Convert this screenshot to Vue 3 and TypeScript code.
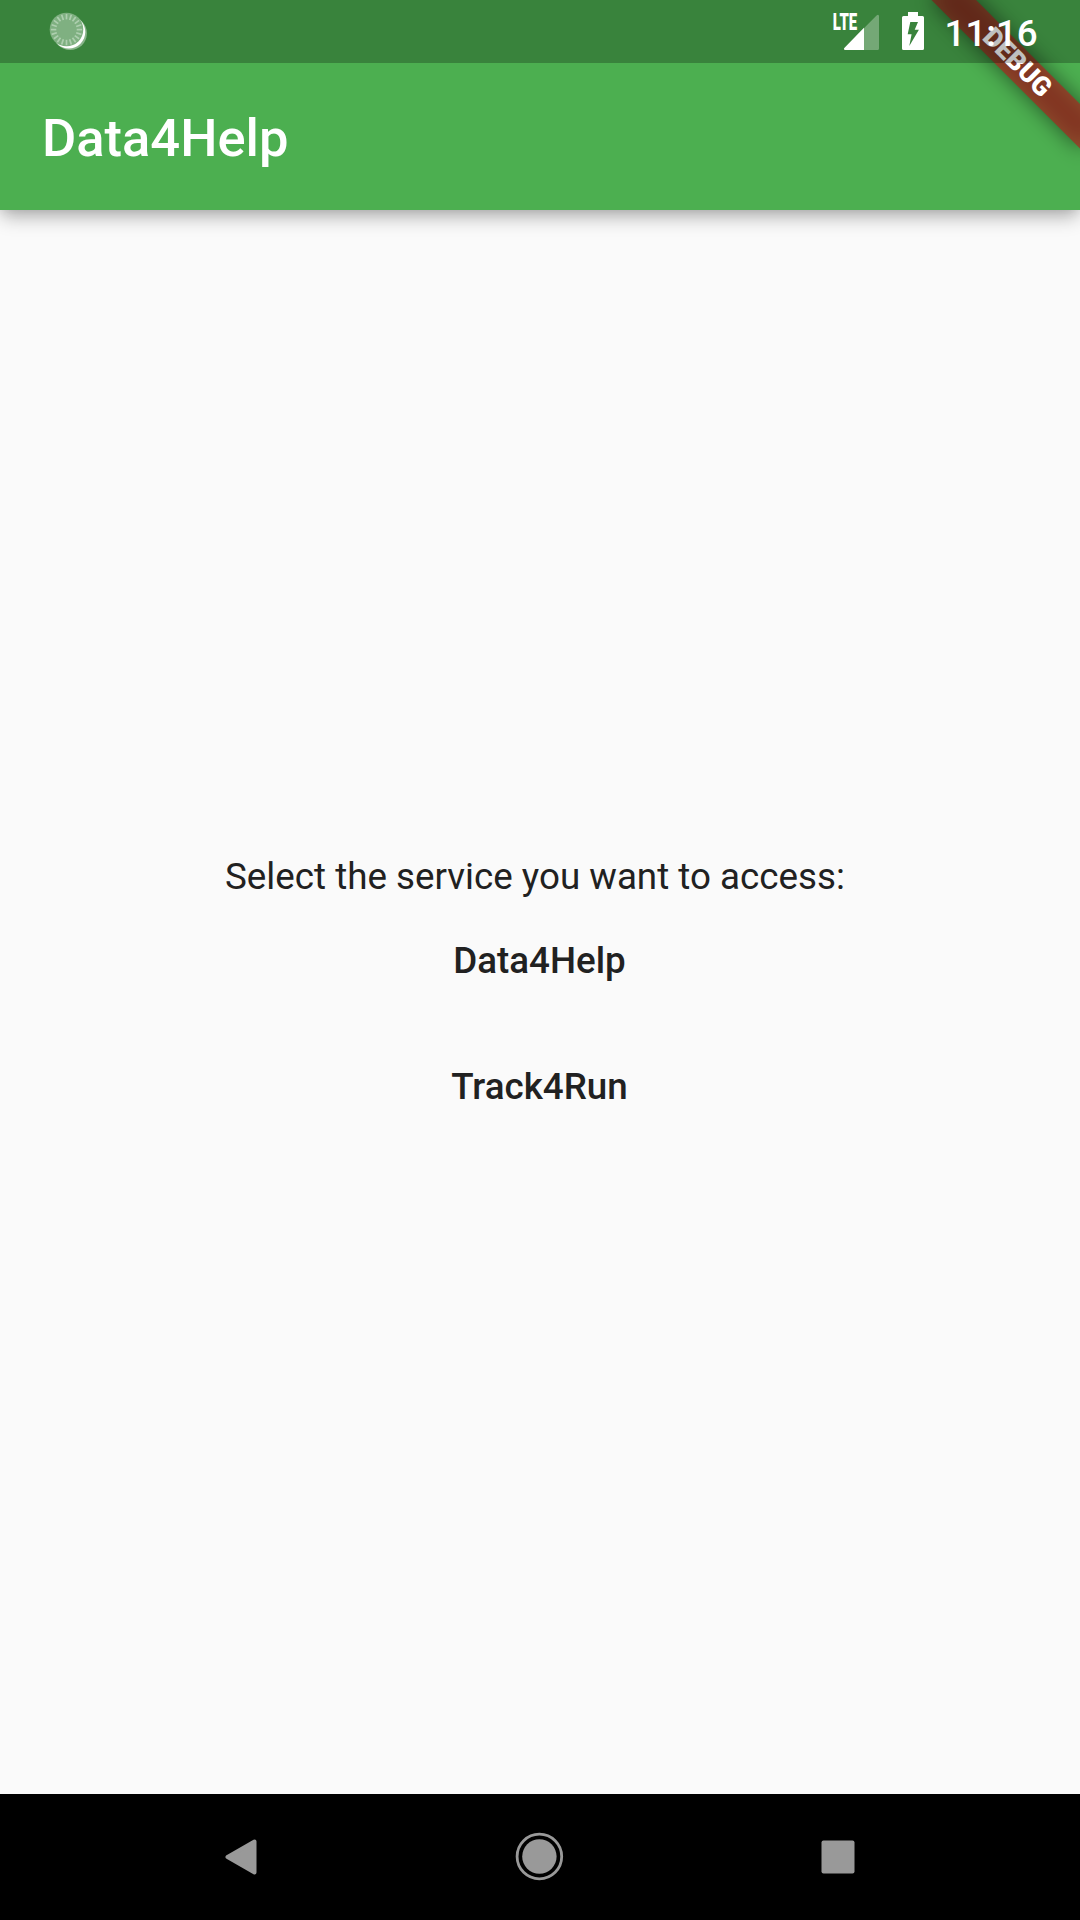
<script setup lang="ts">
interface Service {
  id: string
  label: string
}

const services: Service[] = [
  { id: 'data', label: 'Data4Help' },
  { id: 'track', label: 'Track4Run' },
]

const ticks: number[] = Array.from({ length: 20 }, (_, i) => i * 18)
</script>

<template>
  <div class="screen">
    <header class="app-bar">
      <h1 class="title">Data4Help</h1>
    </header>

    <svg class="debug-banner" width="200" height="210" viewBox="0 0 200 210">
      <defs>
        <filter id="banner-shadow" x="-50%" y="-200%" width="200%" height="500%">
          <feGaussianBlur stdDeviation="10.4" />
        </filter>
      </defs>
      <g transform="translate(200 0) rotate(45)">
        <rect x="-105" y="73.5" width="210" height="31.5" fill="#000" fill-opacity=".5" filter="url(#banner-shadow)" />
        <rect x="-105" y="73.5" width="210" height="31.5" fill="#b71c1c" fill-opacity=".627" />
        <text class="debug-text" x="-42.4" y="97.2" textLength="84.5" lengthAdjust="spacingAndGlyphs">DEBUG</text>
      </g>
    </svg>

    <div class="status-bar">
      <svg class="spinner" width="44" height="44" viewBox="46 8 44 44">
        <circle cx="70.1" cy="33.3" r="16.8" fill="#fff" fill-opacity=".4" />
        <circle cx="68.8" cy="32" r="16.5" fill="#fff" />
        <circle cx="66.5" cy="29.5" r="16.8" fill="#7fb081" />
        <line
          v-for="angle in ticks"
          :key="angle"
          x1="66.5"
          y1="19.4"
          x2="66.5"
          y2="14"
          stroke="#aecfaf"
          stroke-width="1.7"
          :transform="`rotate(${angle} 66.5 29.6)`"
        />
      </svg>
      <div class="status-right">
        <svg class="signal" width="48" height="52" viewBox="832 4 48 52">
          <path d="M844.6 50q-1.3-1 0-2.3L876.3 15.7q2.7-2 2.7.8V48.5q0 1.5-1.5 1.5z" fill="#fff" fill-opacity=".3" />
          <path d="M864 27.8V50H845q-2-.8-.4-2.3z" fill="#fff" />
          <text class="lte" x="832.8" y="30" textLength="24.4" lengthAdjust="spacingAndGlyphs">LTE</text>
        </svg>
        <svg class="battery" width="22" height="40" viewBox="902 12 22 40">
          <path
            fill="#fff"
            fill-rule="evenodd"
            d="M908 12h10v4h4.5q1.5 0 1.5 1.5v31q0 1.5-1.5 1.5h-19q-1.5 0-1.5-1.5v-31q0-1.5 1.5-1.5h4.5zM910.3 22L907.7 34.3H911.6L909.3 46L918.9 29.7H914.7L918 22z"
          />
        </svg>
        <span class="clock">11:16</span>
      </div>
    </div>

    <main class="content">
      <p class="prompt">Select the service you want to access: </p>
      <button v-for="service in services" :key="service.id" class="service" type="button">
        {{ service.label }}
      </button>
    </main>

    <nav class="nav-bar">
      <svg width="36" height="40" viewBox="223 1837 36 40">
        <path d="M227.5 1857L254.5 1841.5V1872.5z" fill="#999" stroke="#999" stroke-width="4" stroke-linejoin="round" />
      </svg>
      <svg width="50" height="50" viewBox="0 0 50 50">
        <circle cx="24.4" cy="24.5" r="22.3" fill="none" stroke="#999" stroke-width="2.8" />
        <circle cx="24.4" cy="24.5" r="17.2" fill="#999" />
      </svg>
      <svg width="34" height="34" viewBox="0 0 34 34">
        <rect x=".5" y=".5" width="33" height="33" rx="2" fill="#999" />
      </svg>
    </nav>
  </div>
</template>

<style>
body {
  margin: 0;
}
</style>

<style scoped>
.screen {
  position: relative;
  display: flex;
  flex-direction: column;
  width: 1080px;
  height: 1920px;
  overflow: hidden;
  background: #fafafa;
  color: #212121;
  font-family: Roboto, sans-serif;
}

.app-bar {
  display: flex;
  flex: none;
  align-items: center;
  box-sizing: border-box;
  height: 210px;
  padding: 65px 42px 0;
  background: #4caf50;
  box-shadow:
    0 8px 18px -2px rgba(0, 0, 0, 0.32),
    0 0 10px rgba(0, 0, 0, 0.08);
}

.title {
  margin: 0;
  color: #fff;
  font-size: 52.5px;
  font-weight: 500;
  line-height: 62px;
}

.debug-banner {
  position: absolute;
  top: 0;
  right: 0;
}

.debug-text {
  fill: #fff;
  font-size: 26.775px;
  font-weight: 900;
}

.status-bar {
  position: absolute;
  top: 0;
  left: 0;
  display: flex;
  justify-content: space-between;
  box-sizing: border-box;
  width: 1080px;
  height: 63px;
  padding: 0 42px 0 46px;
  background: rgba(0, 0, 0, 0.25);
}

.spinner {
  margin-top: 8px;
}

.status-right {
  display: flex;
}

.signal {
  margin-top: 4px;
  margin-right: 22px;
}

.battery {
  margin-top: 12px;
  margin-right: 20px;
}

.lte {
  fill: #fff;
  font-size: 23px;
  font-weight: 900;
}

.clock {
  width: 94px;
  margin-top: 12px;
  color: #fff;
  font-size: 36.75px;
  font-weight: 500;
  line-height: 43px;
  text-indent: 0.5px;
}

.content {
  display: flex;
  flex: 1;
  flex-direction: column;
  align-items: center;
  padding: 645px 1px 0 0;
}

.prompt {
  margin: 0;
  font-size: 36.75px;
  line-height: 43px;
  white-space: pre;
}

.service {
  height: 126px;
  padding: 0 42px 2px;
  border: 0;
  background: none;
  color: inherit;
  font-family: inherit;
  font-size: 36.75px;
  font-weight: 500;
  line-height: 43px;
}

.nav-bar {
  display: flex;
  flex: none;
  align-items: center;
  justify-content: space-between;
  box-sizing: border-box;
  height: 126px;
  padding: 0 225px 0 223px;
  background: #000;
}
</style>
